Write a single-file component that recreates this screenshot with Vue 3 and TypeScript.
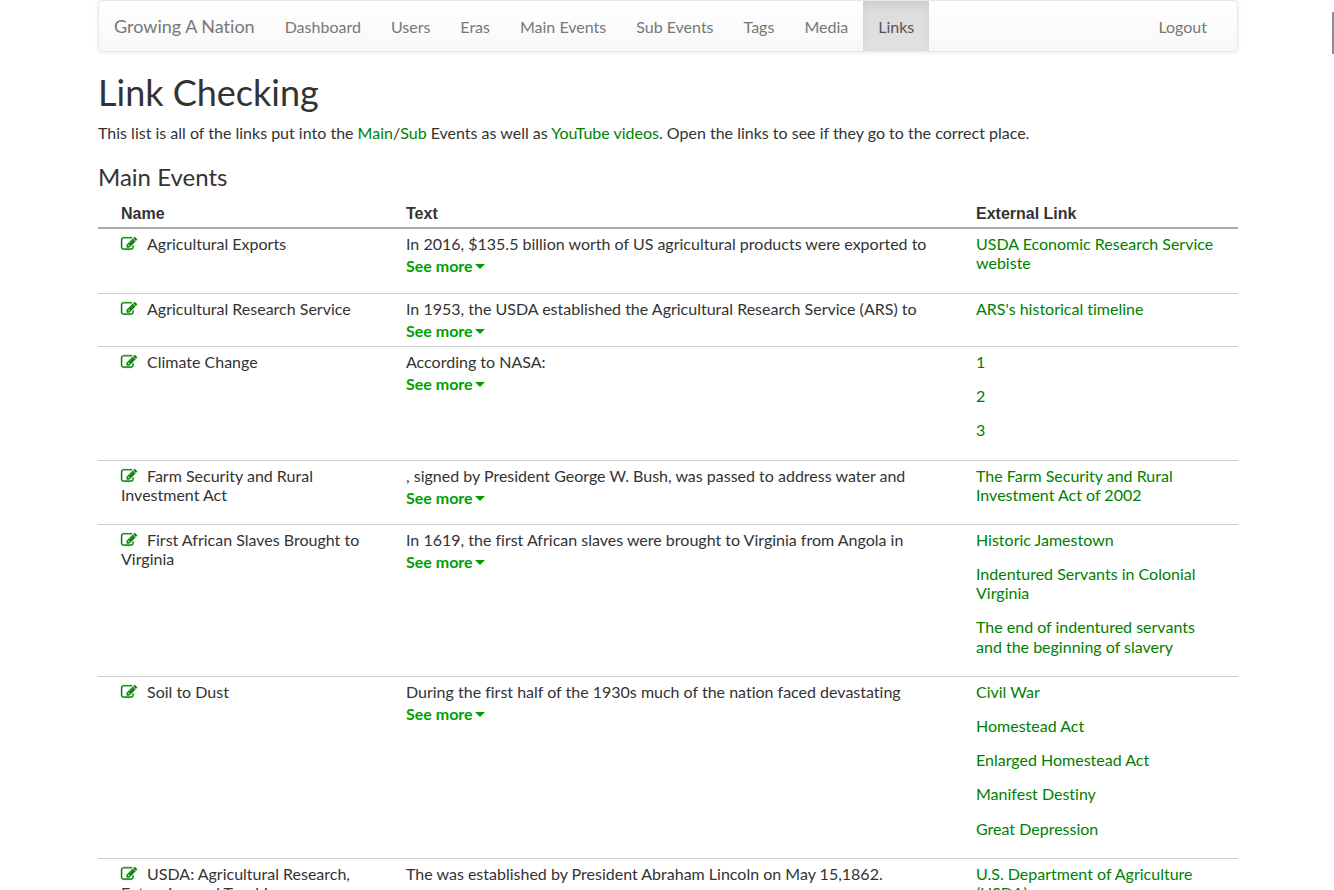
<script setup lang="ts">
interface NavItem {
  label: string
  active?: boolean
}

interface EventRow {
  name: string
  text: string
  links: string[]
  /** Links wrapped in paragraphs carry a bottom margin. */
  spaced: boolean
}

const navItems: NavItem[] = [
  { label: 'Dashboard' },
  { label: 'Users' },
  { label: 'Eras' },
  { label: 'Main Events' },
  { label: 'Sub Events' },
  { label: 'Tags' },
  { label: 'Media' },
  { label: 'Links', active: true },
]

const rows: EventRow[] = [
  {
    name: 'Agricultural Exports',
    text: 'In 2016, $135.5 billion worth of US agricultural products were exported to',
    links: ['USDA Economic Research Service webiste'],
    spaced: true,
  },
  {
    name: 'Agricultural Research Service',
    text: 'In 1953, the USDA established the Agricultural Research Service (ARS) to',
    links: ["ARS's historical timeline"],
    spaced: false,
  },
  { name: 'Climate Change', text: 'According to NASA:', links: ['1', '2', '3'], spaced: true },
  {
    name: 'Farm Security and Rural Investment Act',
    text: ', signed by President George W. Bush, was passed to address water and',
    links: ['The Farm Security and Rural Investment Act of 2002'],
    spaced: true,
  },
  {
    name: 'First African Slaves Brought to Virginia',
    text: 'In 1619, the first African slaves were brought to Virginia from Angola in',
    links: [
      'Historic Jamestown',
      'Indentured Servants in Colonial Virginia',
      'The end of indentured servants and the beginning of slavery',
    ],
    spaced: true,
  },
  {
    name: 'Soil to Dust',
    text: 'During the first half of the 1930s much of the nation faced devastating',
    links: ['Civil War', 'Homestead Act', 'Enlarged Homestead Act', 'Manifest Destiny', 'Great Depression'],
    spaced: true,
  },
  {
    name: 'USDA: Agricultural Research, Extension and Teaching',
    text: 'The was established by President Abraham Lincoln on May 15,1862.',
    links: ['U.S. Department of Agriculture (USDA)'],
    spaced: true,
  },
]
</script>

<template>
  <div class="page">
    <div class="container">
      <nav class="navbar">
        <a class="brand" href="#">Growing A Nation</a>
        <ul class="nav">
          <li v-for="item in navItems" :key="item.label">
            <a href="#" :class="{ active: item.active }">{{ item.label }}</a>
          </li>
        </ul>
        <a class="logout" href="#">Logout</a>
      </nav>

      <main>
        <h1>Link Checking</h1>
        <p class="intro">
          This list is all of the links put into the <a href="#">Main</a>/<a href="#">Sub</a> Events as well as
          <a href="#">YouTube videos</a>. Open the links to see if they go to the correct place.
        </p>

        <h2>Main Events</h2>
        <table>
          <colgroup>
            <col class="col-name" />
            <col class="col-text" />
            <col class="col-link" />
          </colgroup>
          <thead>
            <tr>
              <th scope="col">Name</th>
              <th scope="col">Text</th>
              <th scope="col">External Link</th>
            </tr>
          </thead>
          <tbody>
            <tr v-for="row in rows" :key="row.name">
              <td>
                <a class="edit" href="#" :aria-label="'Edit ' + row.name">
                  <svg viewBox="0 0 1792 1792" aria-hidden="true">
                    <path
                      d="M888 1184l116-116-152-152-116 116v56h96v96h56zm440-720q-16-16-33 1l-350 350q-17 17-1 33t33-1l350-350q17-17 1-33zm80 594v190q0 119-84.5 203.5t-203.5 84.5h-832q-119 0-203.5-84.5t-84.5-203.5v-832q0-119 84.5-203.5t203.5-84.5h832q63 0 117 25 15 7 18 23 3 17-9 29l-49 49q-14 14-32 8-23-6-45-6h-832q-66 0-113 47t-47 113v832q0 66 47 113t113 47h832q66 0 113-47t47-113v-126q0-13 9-22l64-64q15-15 35-7t20 29zm-96-738l288 288-672 672h-288v-288zm444 132l-92 92-288-288 92-92q28-28 68-28t68 28l152 152q28 28 28 68t-28 68z"
                    />
                  </svg></a>{{ row.name }}
              </td>
              <td>
                <div>{{ row.text }}</div>
                <button class="more" type="button">
                  See more<svg viewBox="0 0 10 5" aria-hidden="true"><path d="M0 0h10L5 5z" /></svg>
                </button>
              </td>
              <td>
                <p v-for="link in row.links" :key="link" :class="{ spaced: row.spaced }">
                  <a href="#">{{ link }}</a>
                </p>
              </td>
            </tr>
          </tbody>
        </table>
      </main>
    </div>
    <div class="scroll-thumb"></div>
  </div>
</template>

<style>
body {
  margin: 0;
  background: #fff;
}

html {
  scrollbar-width: none;
}
</style>

<style scoped>
.page {
  color: #333;
  font-family: Lato, 'Liberation Sans', sans-serif;
  font-size: 16px;
  font-variant-ligatures: none;
  line-height: 1.2;
}

.container {
  box-sizing: border-box;
  max-width: 1170px;
  margin: 0 auto;
  padding: 0 14px 0 16px;
}

a {
  color: #008000;
  text-decoration: none;
}

.navbar {
  display: flex;
  align-items: stretch;
  border: 1px solid #e7e7e7;
  border-radius: 4px;
  background: linear-gradient(to bottom, #fff 0%, #f8f8f8 100%);
  box-shadow: inset 0 1px 0 rgba(255, 255, 255, 0.15), 0 1px 5px rgba(0, 0, 0, 0.075);
  line-height: 20px;
}

.navbar a {
  display: block;
  padding: 15px;
  color: #777;
}

.navbar .brand {
  font-size: 18px;
}

.nav {
  display: flex;
  flex: 1;
  margin: 0;
  padding: 0;
  list-style: none;
}

.navbar .nav a,
.navbar .logout {
  padding: 16px 15px 14px;
}

.navbar .nav a.active {
  color: #555;
  background: linear-gradient(to bottom, #dbdbdb 0%, #e2e2e2 100%);
  box-shadow: inset 0 3px 9px rgba(0, 0, 0, 0.075);
}

.navbar .logout {
  margin-right: 15px;
}

h1 {
  margin: 20px 0 10px;
  font-size: 36px;
  font-weight: 400;
  line-height: 40px;
}

.intro {
  margin: 0 0 10px;
  line-height: 21px;
}

h2 {
  margin: 20px 0 10px;
  font-size: 24px;
  font-weight: 400;
  line-height: 28px;
}

table {
  width: 100%;
  table-layout: fixed;
  border-collapse: separate;
  border-spacing: 0;
}

.col-name,
.col-link {
  width: 25%;
}

.col-text {
  width: 50%;
}

th {
  padding: 3px 23px 4px;
  border-bottom: 2px solid #aaa;
  font-family: 'Liberation Sans', Arial, sans-serif;
  font-weight: 700;
  text-align: left;
}

td {
  padding: 5px 23px;
  border-bottom: 1px solid #ccc;
  vertical-align: top;
}

.edit {
  margin-right: 10px;
}

.edit svg {
  width: 16px;
  height: 16px;
  overflow: visible;
  fill: #008000;
  stroke: #008000;
  stroke-width: 40;
  vertical-align: -2px;
}

.more {
  display: flex;
  align-items: center;
  gap: 2px;
  margin: 3px 0 1px;
  padding: 0;
  border: 0;
  background: none;
  color: #00a000;
  font: inherit;
  font-weight: 700;
}

.more svg {
  width: 10px;
  height: 5px;
  margin-top: 2px;
  fill: currentColor;
}

p {
  margin: 0;
}

.spaced {
  margin-bottom: 15px;
}

.scroll-thumb {
  position: fixed;
  top: 12px;
  right: 0;
  width: 2px;
  height: 42px;
  background: linear-gradient(
    to bottom,
    #8f8f8f 7px,
    #7b98b8 7px 11px,
    #8f8f8f 11px 15px,
    #7b98b8 15px 21px,
    #8f8f8f 21px
  );
}
</style>
